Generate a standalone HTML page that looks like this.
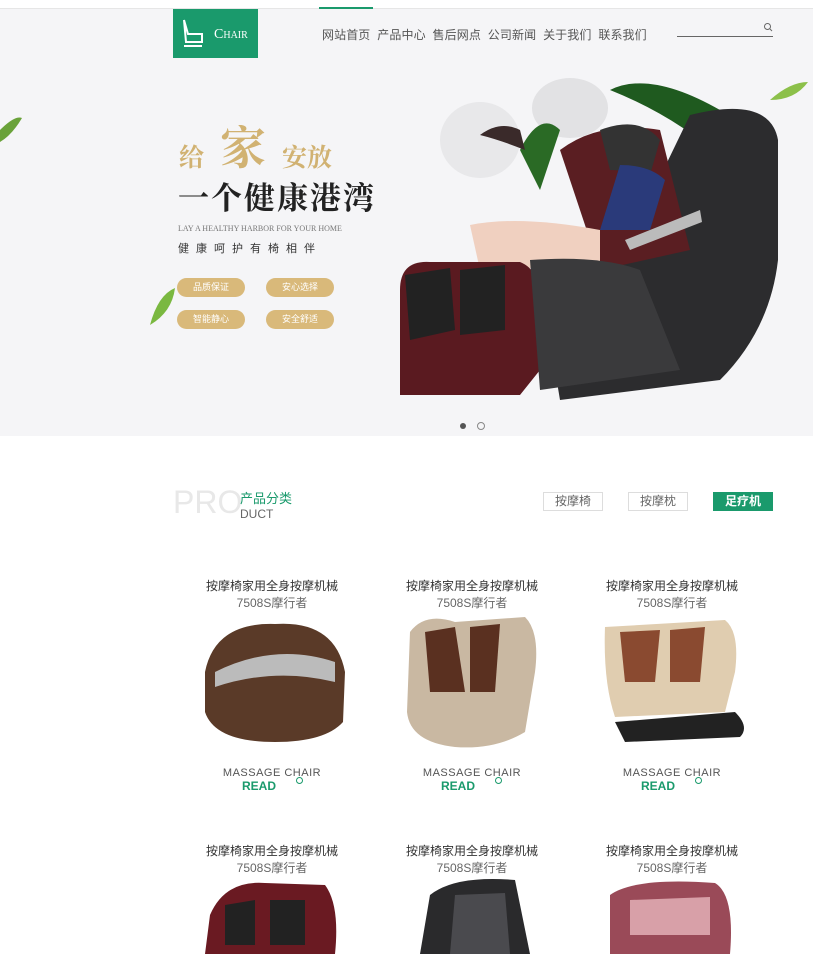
<!DOCTYPE html>
<html><head><meta charset="utf-8"><style>
*{margin:0;padding:0;box-sizing:border-box}
body{width:813px;height:954px;overflow:hidden;background:#fff;font-family:"Liberation Sans","Noto Sans CJK SC",sans-serif;position:relative}
.a{position:absolute}
.banner{left:0;top:8px;width:813px;height:428px;background:#f5f5f7;border-top:1px solid #e6e6e6}
.nav{top:26px;font-size:12px;color:#555;letter-spacing:0.1px}
.btn{width:68px;height:19px;border-radius:10px;background:#d9b97a;color:#fff;font-size:9px;text-align:center;line-height:19px}
.tab{height:19px;border:1px solid #ddd;font-size:12px;color:#666;text-align:center;line-height:17px;top:492px}
.p{width:200px;text-align:center}
.t{font-size:12px;color:#333}
.s{font-size:12px;color:#666}
.m{font-size:11px;color:#555;letter-spacing:0.5px}
.r{font-size:12px;color:#1a9a6c;font-weight:bold}
</style></head><body>
<div class="a banner"></div>
<div class="a" style="left:319px;top:7px;width:54px;height:2px;background:#1a9a6c"></div>
<div class="a" style="left:173px;top:9px;width:85px;height:49px;background:#1a9a6c"></div>
<svg class="a" style="left:178px;top:16px" width="30" height="36" viewBox="0 0 30 36" fill="none" stroke="#fff" stroke-width="2"><path d="M6 4 L10 18 L24 18 L24 26 L8 26 Z"/><path d="M6 30 H24"/></svg>
<div class="a" style="left:214px;top:27px;color:#fff;font-size:14px;font-family:'Liberation Serif',serif">C<span style="font-size:10px">HAIR</span></div>
<div class="a nav" style="left:322px">网站首页&nbsp;&nbsp;产品中心&nbsp;&nbsp;售后网点&nbsp;&nbsp;公司新闻&nbsp;&nbsp;关于我们&nbsp;&nbsp;联系我们</div>
<div class="a" style="left:677px;top:36px;width:96px;height:1px;background:#666"></div>
<svg class="a" style="left:763px;top:22px" width="10" height="10" viewBox="0 0 10 10" fill="none" stroke="#666"><circle cx="4.5" cy="4.5" r="3"/><path d="M7 7 L9 9"/></svg>

<div class="a" style="left:179px;top:138px;font-size:25px;color:#d1b272;font-family:'Noto Serif CJK SC',serif;font-weight:bold">给</div>
<div class="a" style="left:220px;top:112px;font-size:46px;color:#d1b272;font-family:'Noto Serif CJK SC',serif;font-weight:bold">家</div>
<div class="a" style="left:282px;top:138px;font-size:25px;color:#d1b272;font-family:'Noto Serif CJK SC',serif;font-weight:bold">安放</div>
<div class="a" style="left:178px;top:173px;font-size:31px;color:#222;font-family:'Noto Serif CJK SC',serif;font-weight:bold;letter-spacing:2px">一个健康港湾</div>
<div class="a" style="left:178px;top:224px;font-size:8px;color:#777;font-family:'Liberation Serif',serif">LAY A HEALTHY HARBOR FOR YOUR HOME</div>
<div class="a" style="left:178px;top:240px;font-size:11px;color:#333;letter-spacing:7px">健康呵护有椅相伴</div>
<div class="a btn" style="left:177px;top:278px">品质保证</div>
<div class="a btn" style="left:266px;top:278px">安心选择</div>
<div class="a btn" style="left:177px;top:310px">智能静心</div>
<div class="a btn" style="left:266px;top:310px">安全舒适</div>
<svg class="a" style="left:0;top:60px" width="813" height="360" viewBox="0 60 813 360">
<path d="M0 130 Q15 115 22 118 Q12 135 0 142Z" fill="#6aa23a"/>
<path d="M150 325 Q158 295 175 288 Q172 312 150 325Z" fill="#7ab840"/>
<path d="M770 100 Q790 82 808 82 Q795 100 770 100Z" fill="#8cc04a"/>
<ellipse cx="480" cy="140" rx="40" ry="38" fill="#e8e8ea"/>
<ellipse cx="570" cy="108" rx="38" ry="30" fill="#e2e2e4"/>
<path d="M610 90 Q650 70 720 110 L700 140 Q660 110 610 90Z" fill="#1f5a1f"/>
<path d="M520 150 Q540 110 560 130 L540 190Z" fill="#2a6a25"/>
<path d="M480 135 Q500 120 520 130 L525 150 Q500 140 480 135Z" fill="#3a2a2a"/>
<path d="M690 115 Q770 95 778 140 L778 260 Q770 330 720 380 L560 400 L540 280 L620 260 Z" fill="#2c2c2e"/>
<path d="M560 150 Q600 120 660 130 L690 250 L600 270 Z" fill="#5a1e22"/>
<path d="M600 130 Q640 115 660 140 L650 175 Q620 170 610 170Z" fill="#333"/>
<path d="M620 165 Q650 165 665 180 L650 230 L600 230 Z" fill="#2a3a7a"/>
<path d="M470 225 Q520 215 600 230 L600 265 L480 270Z" fill="#f0d0c0"/>
<path d="M400 290 Q400 260 430 262 L520 262 Q540 270 540 300 L540 370 L520 395 L400 395Z" fill="#5a1a20"/>
<path d="M405 275 L450 268 L455 330 L410 340Z" fill="#222"/>
<path d="M460 270 L505 265 L505 330 L460 335Z" fill="#222"/>
<path d="M530 260 Q600 255 640 270 L680 370 L540 390 Z" fill="#3a3a3c"/>
<path d="M625 240 L700 210 L702 222 L630 250Z" fill="#bbb"/>
</svg>
<div class="a" style="left:460px;top:423px;width:6px;height:6px;border-radius:50%;background:#555"></div>
<div class="a" style="left:477px;top:422px;width:8px;height:8px;border-radius:50%;border:1px solid #888"></div>

<div class="a" style="left:173px;top:484px;font-size:32px;color:#e8e8e8">PRO</div>
<div class="a" style="left:240px;top:488px;font-size:13px;color:#1a9a6c">产品分类</div>
<div class="a" style="left:240px;top:507px;font-size:12px;color:#666">DUCT</div>
<div class="a tab" style="left:543px;width:60px">按摩椅</div>
<div class="a tab" style="left:628px;width:60px">按摩枕</div>
<div class="a tab" style="left:713px;width:60px;background:#1a9a6c;border-color:#1a9a6c;color:#fff;font-weight:bold">足疗机</div>

<div class="a p" style="left:172px;top:577px"><div class="t">按摩椅家用全身按摩机械</div><div class="s">7508S摩行者</div></div>
<div class="a p" style="left:372px;top:577px"><div class="t">按摩椅家用全身按摩机械</div><div class="s">7508S摩行者</div></div>
<div class="a p" style="left:572px;top:577px"><div class="t">按摩椅家用全身按摩机械</div><div class="s">7508S摩行者</div></div>
<svg class="a" style="left:195px;top:612px" width="560" height="140" viewBox="0 0 560 140">
<path d="M10 60 Q20 10 80 12 Q140 8 150 60 L148 110 Q130 130 80 130 Q20 130 10 100Z" fill="#5a3a28"/>
<path d="M20 60 Q80 30 140 50 L140 70 Q80 55 20 75Z" fill="#bbb"/>
<path d="M215 20 Q230 0 260 10 L330 5 Q345 20 340 60 L330 120 Q300 138 260 135 Q215 130 212 100Z" fill="#c9b8a2"/>
<path d="M230 20 L260 15 L270 80 L235 80Z" fill="#5a3020"/><path d="M275 15 L305 12 L300 80 L275 80Z" fill="#5a3020"/>
<path d="M410 15 L530 8 Q545 20 540 60 L530 100 L420 105 Q408 70 410 15Z" fill="#e0cdb0"/>
<path d="M420 110 L540 100 Q555 115 545 125 L430 130 Z" fill="#222"/>
<path d="M425 20 L465 18 L460 70 L430 70Z" fill="#8a4a30"/><path d="M475 18 L510 15 L505 70 L475 70Z" fill="#8a4a30"/>
</svg>
<div class="a p m" style="left:172px;top:767px">MASSAGE CHAIR</div>
<div class="a p m" style="left:372px;top:767px">MASSAGE CHAIR</div>
<div class="a p m" style="left:572px;top:767px">MASSAGE CHAIR</div>
<div class="a r" style="left:242px;top:779px">READ</div>
<div class="a r" style="left:441px;top:779px">READ</div>
<div class="a r" style="left:641px;top:779px">READ</div>
<div class="a" style="left:296px;top:777px;width:7px;height:7px;border-radius:50%;border:1px solid #1a9a6c"></div>
<div class="a" style="left:495px;top:777px;width:7px;height:7px;border-radius:50%;border:1px solid #1a9a6c"></div>
<div class="a" style="left:695px;top:777px;width:7px;height:7px;border-radius:50%;border:1px solid #1a9a6c"></div>

<div class="a p" style="left:172px;top:842px"><div class="t">按摩椅家用全身按摩机械</div><div class="s">7508S摩行者</div></div>
<div class="a p" style="left:372px;top:842px"><div class="t">按摩椅家用全身按摩机械</div><div class="s">7508S摩行者</div></div>
<div class="a p" style="left:572px;top:842px"><div class="t">按摩椅家用全身按摩机械</div><div class="s">7508S摩行者</div></div>
<svg class="a" style="left:195px;top:875px" width="560" height="79" viewBox="0 0 560 79">
<path d="M15 40 Q30 5 70 8 L130 10 Q145 30 140 79 L10 79Z" fill="#6a1a22"/>
<path d="M30 30 L60 25 L60 70 L30 70Z" fill="#222"/><path d="M75 25 L110 25 L110 70 L75 70Z" fill="#222"/>
<path d="M235 20 Q260 0 320 5 L335 79 L225 79Z" fill="#2a2a2c"/>
<path d="M260 20 L310 18 L315 79 L255 79Z" fill="#4a4a4e"/>
<path d="M415 20 Q440 2 520 8 Q540 20 535 79 L415 79Z" fill="#9a4a58"/>
<path d="M435 25 L515 22 L515 60 L435 60Z" fill="#d8a0a8"/>
</svg>
</body></html>
